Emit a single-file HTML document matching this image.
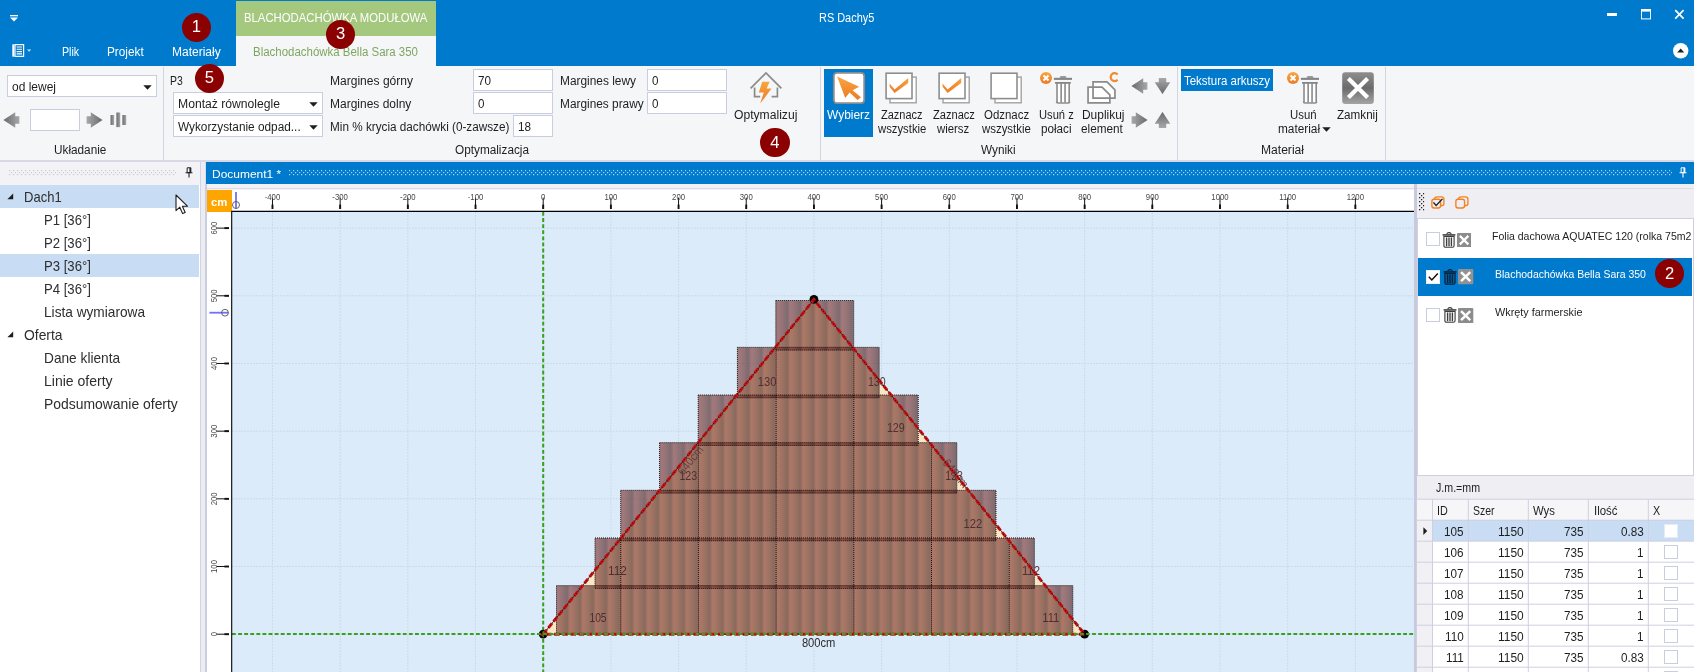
<!DOCTYPE html>
<html lang="pl"><head><meta charset="utf-8"><title>RS Dachy5</title>
<style>
html,body{margin:0;padding:0;}
body{width:1694px;height:672px;overflow:hidden;background:#fff;position:relative;
font-family:"Liberation Sans",sans-serif;font-size:12px;color:#1e1e1e;}
#app{position:absolute;left:0;top:0;width:1694px;height:672px;overflow:hidden;will-change:transform;}
#app div,#app span,#app svg{position:absolute;box-sizing:border-box;}
</style></head><body><div id="app">
<div style="left:0px;top:0px;width:1694px;height:66px;background:#007acc;"></div>
<div style="left:236px;top:1px;width:200px;height:35px;background:#a5c87f;"></div>
<div style="left:236px;top:36px;width:200px;height:30px;background:#f5f6f8;"></div>
<span style="left:244.30px;top:7.70px;height:20px;line-height:20px;font-size:12px;color:#ffffff;white-space:nowrap;transform-origin:0 50%;transform:scaleX(0.9440);">BLACHODACHÓWKA MODUŁOWA</span>
<span style="left:253.30px;top:42.10px;height:20px;line-height:20px;font-size:12px;color:#7fa65f;white-space:nowrap;transform-origin:0 50%;transform:scaleX(0.9549);">Blachodachówka Bella Sara 350</span>
<span style="left:819.00px;top:7.70px;height:20px;line-height:20px;font-size:12px;color:#ffffff;white-space:nowrap;transform-origin:0 50%;transform:scaleX(0.9107);">RS Dachy5</span>
<span style="left:61.70px;top:42.10px;height:20px;line-height:20px;font-size:12px;color:#ffffff;white-space:nowrap;transform-origin:0 50%;transform:scaleX(0.8899);">Plik</span>
<span style="left:107.30px;top:42.10px;height:20px;line-height:20px;font-size:12px;color:#ffffff;white-space:nowrap;transform-origin:0 50%;transform:scaleX(0.9834);">Projekt</span>
<span style="left:172.30px;top:42.10px;height:20px;line-height:20px;font-size:12px;color:#ffffff;white-space:nowrap;transform-origin:0 50%;transform:scaleX(0.9996);">Materiały</span>
<svg style="left:9px;top:13.8px" width="10" height="9" viewBox="0 0 10 9"><rect x="1" y="1" width="8" height="1.3" fill="#fff"/><path d="M1 3.6h8L5 7.6z" fill="#fff"/></svg>
<svg style="left:12.3px;top:44.4px" width="22" height="13.4" viewBox="0 0 22 13" preserveAspectRatio="none"><rect x="0.3" y="0.3" width="2" height="12" fill="#fff"/><rect x="3" y="0.6" width="8.6" height="11.4" fill="none" stroke="#fff" stroke-width="1.2"/><path d="M4.6 3h5.4M4.6 5.2h5.4M4.6 7.4h5.4M4.6 9.6h5.4" stroke="#fff" stroke-width="1"/><path d="M15 5.4h4.2L17.1 7.6z" fill="#cfe4f6"/></svg>
<div style="left:1606.6px;top:13px;width:10.0px;height:3px;background:#ffffff;"></div>
<svg style="left:1640.6px;top:9.2px" width="11" height="11" viewBox="0 0 11 11"><rect x="0.5" y="0.5" width="9" height="9.4" fill="none" stroke="#fff" stroke-width="1"/><rect x="0" y="0" width="10" height="2.6" fill="#fff"/></svg>
<svg style="left:1674px;top:9px" width="11" height="11" viewBox="0 0 11 11"><path d="M1.2 1.2l8.4 8.4M9.6 1.2L1.2 9.6" stroke="#fff" stroke-width="1.7"/></svg>
<svg style="left:1672px;top:42px" width="18" height="18" viewBox="0 0 18 18"><circle cx="8.7" cy="8.7" r="7.7" fill="#fff"/><path d="M5.2 10.4h7L8.7 6.6z" fill="#1e1e1e"/></svg>
<div style="left:0px;top:66px;width:1694px;height:94px;background:#f5f6f8;"></div>
<div style="left:0px;top:160px;width:1694px;height:2px;background:#d9d9e6;"></div>
<div style="left:163px;top:67px;width:1px;height:93px;background:#d4d4e2;"></div>
<div style="left:820px;top:67px;width:1px;height:93px;background:#d4d4e2;"></div>
<div style="left:1177px;top:67px;width:1px;height:93px;background:#d4d4e2;"></div>
<div style="left:1385px;top:67px;width:1px;height:93px;background:#d4d4e2;"></div>
<div style="left:7px;top:75px;width:150px;height:22px;background:#ffffff;border:1px solid #c9cde0;"></div>
<span style="left:12.00px;top:76.70px;height:20px;line-height:20px;font-size:12px;color:#1e1e1e;white-space:nowrap;transform-origin:0 50%;transform:scaleX(0.9991);">od lewej</span>
<svg style="left:143px;top:84.6px" width="9" height="5" viewBox="0 0 9 5"><path d="M0.3 0.3h8.4L4.5 4.7z" fill="#1e1e1e"/></svg>
<div style="left:30px;top:109px;width:50px;height:22px;background:#ffffff;border:1px solid #c9cde0;"></div>
<svg style="left:0;top:0" width="0" height="0"><defs><linearGradient id="ag" x1="0" y1="0" x2="1" y2="0"><stop offset="0" stop-color="#6a6a6a"/><stop offset="1" stop-color="#a8a8a8"/></linearGradient><linearGradient id="zg" x1="0" y1="0" x2="0" y2="1"><stop offset="0" stop-color="#8e8e8e"/><stop offset="0.5" stop-color="#6b6b6b"/><stop offset="1" stop-color="#a4a4a4"/></linearGradient><linearGradient id="og" x1="0" y1="0" x2="0" y2="1"><stop offset="0" stop-color="#f7a541"/><stop offset="1" stop-color="#ee7a25"/></linearGradient></defs></svg>
<svg style="left:3.3px;top:112px" width="17" height="16" viewBox="0 0 17 16"><path transform="rotate(0 8.5 8)" d="M0.4 8L12.2 0.2V4.3H16.4V11.7H12.2V15.8z" fill="url(#ag)"/></svg>
<svg style="left:86.3px;top:112px" width="17" height="16" viewBox="0 0 17 16"><path transform="rotate(180 8.5 8)" d="M0.4 8L12.2 0.2V4.3H16.4V11.7H12.2V15.8z" fill="url(#ag)"/></svg>
<svg style="left:110px;top:112px" width="17" height="16" viewBox="0 0 17 16"><rect x="0.5" y="3" width="3.6" height="10" fill="url(#ag)"/><rect x="6.4" y="0.5" width="3.8" height="14.6" fill="url(#ag)"/><rect x="12.4" y="3" width="3.8" height="10" fill="url(#ag)"/></svg>
<span style="left:54.30px;top:139.70px;height:20px;line-height:20px;font-size:12px;color:#1e1e1e;white-space:nowrap;transform-origin:0 50%;transform:scaleX(0.9813);">Układanie</span>
<span style="left:170.30px;top:70.70px;height:20px;line-height:20px;font-size:12px;color:#1e1e1e;white-space:nowrap;transform-origin:0 50%;transform:scaleX(0.8675);">P3</span>
<div style="left:173px;top:92px;width:150px;height:22px;background:#ffffff;border:1px solid #c9cde0;"></div>
<span style="left:178.20px;top:94.10px;height:20px;line-height:20px;font-size:12px;color:#1e1e1e;white-space:nowrap;transform-origin:0 50%;transform:scaleX(1.0131);">Montaż równolegle</span>
<svg style="left:309px;top:101.5px" width="9" height="5" viewBox="0 0 9 5"><path d="M0.3 0.3h8.4L4.5 4.7z" fill="#1e1e1e"/></svg>
<div style="left:173px;top:115px;width:150px;height:22px;background:#ffffff;border:1px solid #c9cde0;"></div>
<span style="left:178.00px;top:116.50px;height:20px;line-height:20px;font-size:12px;color:#1e1e1e;white-space:nowrap;transform-origin:0 50%;transform:scaleX(0.9843);">Wykorzystanie odpad...</span>
<svg style="left:309px;top:124.5px" width="9" height="5" viewBox="0 0 9 5"><path d="M0.3 0.3h8.4L4.5 4.7z" fill="#1e1e1e"/></svg>
<span style="left:330.40px;top:70.70px;height:20px;line-height:20px;font-size:12px;color:#1e1e1e;white-space:nowrap;transform-origin:0 50%;transform:scaleX(1.0039);">Margines górny</span>
<span style="left:330.40px;top:93.70px;height:20px;line-height:20px;font-size:12px;color:#1e1e1e;white-space:nowrap;transform-origin:0 50%;transform:scaleX(0.9993);">Margines dolny</span>
<span style="left:330.40px;top:116.50px;height:20px;line-height:20px;font-size:12px;color:#1e1e1e;white-space:nowrap;transform-origin:0 50%;transform:scaleX(0.9784);">Min % krycia dachówki (0-zawsze)</span>
<div style="left:473px;top:69px;width:80px;height:22px;background:#ffffff;border:1px solid #c9cde0;"></div>
<span style="left:478.00px;top:70.70px;height:20px;line-height:20px;font-size:12px;color:#1e1e1e;white-space:nowrap;transform-origin:0 50%;transform:scaleX(0.9760);">70</span>
<div style="left:473px;top:92px;width:80px;height:22px;background:#ffffff;border:1px solid #c9cde0;"></div>
<span style="left:478.00px;top:93.70px;height:20px;line-height:20px;font-size:12px;color:#1e1e1e;white-space:nowrap;transform-origin:0 50%;transform:scaleX(0.9673);">0</span>
<div style="left:513px;top:115px;width:40px;height:22px;background:#ffffff;border:1px solid #c9cde0;"></div>
<span style="left:518.00px;top:116.50px;height:20px;line-height:20px;font-size:12px;color:#1e1e1e;white-space:nowrap;transform-origin:0 50%;transform:scaleX(0.9760);">18</span>
<span style="left:560.00px;top:70.70px;height:20px;line-height:20px;font-size:12px;color:#1e1e1e;white-space:nowrap;transform-origin:0 50%;transform:scaleX(0.9911);">Margines lewy</span>
<span style="left:560.00px;top:93.70px;height:20px;line-height:20px;font-size:12px;color:#1e1e1e;white-space:nowrap;transform-origin:0 50%;transform:scaleX(0.9880);">Margines prawy</span>
<div style="left:647px;top:69px;width:80px;height:22px;background:#ffffff;border:1px solid #c9cde0;"></div>
<span style="left:652.00px;top:70.70px;height:20px;line-height:20px;font-size:12px;color:#1e1e1e;white-space:nowrap;transform-origin:0 50%;transform:scaleX(0.9673);">0</span>
<div style="left:647px;top:92px;width:80px;height:22px;background:#ffffff;border:1px solid #c9cde0;"></div>
<span style="left:652.00px;top:93.70px;height:20px;line-height:20px;font-size:12px;color:#1e1e1e;white-space:nowrap;transform-origin:0 50%;transform:scaleX(0.9673);">0</span>
<svg style="left:749px;top:71px" width="34" height="34" viewBox="0 0 34 34"><path d="M1.6 17.4L17 1.9L32.4 17.4" fill="none" stroke="#8a8a8a" stroke-width="1.7"/><path d="M5.6 16.5V25.6H11.2M28.4 16.5V25.6H22.6" fill="none" stroke="#8a8a8a" stroke-width="1.7"/><path d="M13.2 10.8H20.6L17.6 17.6H22.6L11.2 32.6L14.8 21.6H9.8z" fill="url(#og)"/></svg>
<span style="left:734.00px;top:104.90px;height:20px;line-height:20px;font-size:12px;color:#1e1e1e;white-space:nowrap;transform-origin:0 50%;transform:scaleX(1.0105);">Optymalizuj</span>
<span style="left:455.00px;top:139.70px;height:20px;line-height:20px;font-size:12px;color:#1e1e1e;white-space:nowrap;transform-origin:0 50%;transform:scaleX(0.9820);">Optymalizacja</span>
<div style="left:824px;top:69px;width:49px;height:68px;background:#007acc;"></div>
<svg style="left:832px;top:71px" width="34" height="34" viewBox="0 0 34 34"><rect x="1.8" y="1.8" width="30.4" height="30.4" rx="3.2" fill="#fff" stroke="#8b8b8b" stroke-width="1.8"/><path d="M5.1 5.5L27.1 15.8L20.6 19.2L28.9 26.2L25.6 28.9L17.6 21.6L13.2 26.9z" fill="url(#og)"/></svg>
<span style="left:826.50px;top:104.90px;height:20px;line-height:20px;font-size:12px;color:#ffffff;white-space:nowrap;transform-origin:0 50%;transform:scaleX(0.9954);">Wybierz</span>
<svg style="left:884px;top:71px" width="34" height="34" viewBox="0 0 34 34"><rect x="6" y="6.1" width="26.2" height="25.7" fill="#fff" stroke="#a2a2a2" stroke-width="1.4"/><rect x="2.1" y="2.2" width="25.9" height="25.4" fill="#fff" stroke="#8e8e8e" stroke-width="1.6"/><path d="M5.6 12.6L10.6 18.4L24.2 6.9V11.9L10.6 22L5.6 15.8z" fill="url(#og)"/></svg>
<span style="left:880.50px;top:104.90px;height:20px;line-height:20px;font-size:12px;color:#1e1e1e;white-space:nowrap;transform-origin:0 50%;transform:scaleX(0.9149);">Zaznacz</span>
<span style="left:877.61px;top:118.70px;height:20px;line-height:20px;font-size:12px;color:#1e1e1e;white-space:nowrap;transform-origin:0 50%;transform:scaleX(0.9421);">wszystkie</span>
<svg style="left:937px;top:71px" width="34" height="34" viewBox="0 0 34 34"><rect x="6" y="6.1" width="26.2" height="25.7" fill="#fff" stroke="#a2a2a2" stroke-width="1.4"/><rect x="2.1" y="2.2" width="25.9" height="25.4" fill="#fff" stroke="#8e8e8e" stroke-width="1.6"/><path d="M5.6 12.6L10.6 18.4L24.2 6.9V11.9L10.6 22L5.6 15.8z" fill="url(#og)"/></svg>
<span style="left:933.10px;top:104.90px;height:20px;line-height:20px;font-size:12px;color:#1e1e1e;white-space:nowrap;transform-origin:0 50%;transform:scaleX(0.9237);">Zaznacz</span>
<span style="left:937.41px;top:118.70px;height:20px;line-height:20px;font-size:12px;color:#1e1e1e;white-space:nowrap;transform-origin:0 50%;transform:scaleX(0.9478);">wiersz</span>
<svg style="left:989px;top:71px" width="34" height="34" viewBox="0 0 34 34"><rect x="6" y="6.1" width="26.2" height="25.7" fill="#fff" stroke="#a2a2a2" stroke-width="1.4"/><rect x="2.1" y="2.2" width="25.9" height="25.4" fill="#fff" stroke="#8e8e8e" stroke-width="1.6"/></svg>
<span style="left:984.20px;top:104.90px;height:20px;line-height:20px;font-size:12px;color:#1e1e1e;white-space:nowrap;transform-origin:0 50%;transform:scaleX(0.9536);">Odznacz</span>
<span style="left:982.21px;top:118.70px;height:20px;line-height:20px;font-size:12px;color:#1e1e1e;white-space:nowrap;transform-origin:0 50%;transform:scaleX(0.9499);">wszystkie</span>
<svg style="left:1039px;top:71px" width="34" height="34" viewBox="0 0 34 34"><circle cx="7" cy="7" r="6" fill="url(#og)"/><path d="M4.5 4.5l5 5M9.5 4.5L4.5 9.5" stroke="#fff" stroke-width="2.1"/><rect x="14.9" y="6.8" width="18.1" height="2.1" fill="#858585"/><path d="M20.8 7V6.4Q20.8 5 22.4 5H25.8Q27.4 5 27.4 6.4V7z" fill="#9a9a9a"/><path d="M17.2 11H31V31Q31 32.7 29.3 32.7H18.9Q17.2 32.7 17.2 31z" fill="#ffffff"/><rect x="16" y="11" width="15.8" height="1.8" fill="#858585"/><path d="M18 12V31.4M22.15 12V31.4M26.05 12V31.4M30.2 12V31.4" stroke="#8a8a8a" stroke-width="1.6"/><path d="M17.4 30.6Q17.6 32 19 32H29.2Q30.6 32 30.8 30.6" fill="none" stroke="#8a8a8a" stroke-width="1.5"/></svg>
<span style="left:1038.50px;top:104.90px;height:20px;line-height:20px;font-size:12px;color:#1e1e1e;white-space:nowrap;transform-origin:0 50%;transform:scaleX(0.9298);">Usuń z</span>
<span style="left:1040.70px;top:118.70px;height:20px;line-height:20px;font-size:12px;color:#1e1e1e;white-space:nowrap;transform-origin:0 50%;transform:scaleX(0.9738);">połaci</span>
<svg style="left:1086px;top:71px" width="34" height="34" viewBox="0 0 34 34"><path d="M7.05 10.95H21L28.95 18.8V27.15H7.05z" fill="#fff" stroke="#8a8a8a" stroke-width="1.7"/><path d="M2.05 16.05H16L23.85 23.9V31.85H2.05z" fill="#fff" fill-opacity="0.85" stroke="#8a8a8a" stroke-width="1.7"/><path d="M7.05 16V27.15H23.8" fill="none" stroke="#8a8a8a" stroke-width="1.7"/><path d="M31.6 3.4A4 4 0 1 0 31.6 8.8" fill="none" stroke="#f08a2c" stroke-width="2.2"/></svg>
<span style="left:1081.50px;top:104.90px;height:20px;line-height:20px;font-size:12px;color:#1e1e1e;white-space:nowrap;transform-origin:0 50%;transform:scaleX(0.9949);">Duplikuj</span>
<span style="left:1081.30px;top:118.70px;height:20px;line-height:20px;font-size:12px;color:#1e1e1e;white-space:nowrap;transform-origin:0 50%;transform:scaleX(0.9808);">element</span>
<svg style="left:1130.8px;top:78px" width="17" height="16" viewBox="0 0 17 16"><path transform="rotate(0 8.5 8)" d="M0.4 8L12.2 0.2V4.3H16.4V11.7H12.2V15.8z" fill="url(#ag)"/></svg>
<svg style="left:1153.9px;top:78px" width="17" height="16" viewBox="0 0 17 16"><path transform="rotate(270 8.5 8)" d="M0.4 8L12.2 0.2V4.3H16.4V11.7H12.2V15.8z" fill="url(#ag)"/></svg>
<svg style="left:1130.8px;top:112.4px" width="17" height="16" viewBox="0 0 17 16"><path transform="rotate(180 8.5 8)" d="M0.4 8L12.2 0.2V4.3H16.4V11.7H12.2V15.8z" fill="url(#ag)"/></svg>
<svg style="left:1153.9px;top:112.4px" width="17" height="16" viewBox="0 0 17 16"><path transform="rotate(90 8.5 8)" d="M0.4 8L12.2 0.2V4.3H16.4V11.7H12.2V15.8z" fill="url(#ag)"/></svg>
<span style="left:981.00px;top:139.70px;height:20px;line-height:20px;font-size:12px;color:#1e1e1e;white-space:nowrap;transform-origin:0 50%;transform:scaleX(0.9836);">Wyniki</span>
<div style="left:1181px;top:69px;width:92px;height:22px;background:#007acc;"></div>
<span style="left:1184.20px;top:70.70px;height:20px;line-height:20px;font-size:12px;color:#ffffff;white-space:nowrap;transform-origin:0 50%;transform:scaleX(0.9556);">Tekstura arkuszy</span>
<svg style="left:1286px;top:71px" width="34" height="34" viewBox="0 0 34 34"><circle cx="7" cy="7" r="6" fill="url(#og)"/><path d="M4.5 4.5l5 5M9.5 4.5L4.5 9.5" stroke="#fff" stroke-width="2.1"/><rect x="14.9" y="6.8" width="18.1" height="2.1" fill="#858585"/><path d="M20.8 7V6.4Q20.8 5 22.4 5H25.8Q27.4 5 27.4 6.4V7z" fill="#9a9a9a"/><path d="M17.2 11H31V31Q31 32.7 29.3 32.7H18.9Q17.2 32.7 17.2 31z" fill="#ffffff"/><rect x="16" y="11" width="15.8" height="1.8" fill="#858585"/><path d="M18 12V31.4M22.15 12V31.4M26.05 12V31.4M30.2 12V31.4" stroke="#8a8a8a" stroke-width="1.6"/><path d="M17.4 30.6Q17.6 32 19 32H29.2Q30.6 32 30.8 30.6" fill="none" stroke="#8a8a8a" stroke-width="1.5"/></svg>
<span style="left:1290.20px;top:104.90px;height:20px;line-height:20px;font-size:12px;color:#1e1e1e;white-space:nowrap;transform-origin:0 50%;transform:scaleX(0.9478);">Usuń</span>
<span style="left:1277.90px;top:118.70px;height:20px;line-height:20px;font-size:12px;color:#1e1e1e;white-space:nowrap;transform-origin:0 50%;transform:scaleX(0.9855);">materiał</span>
<svg style="left:1322px;top:126.6px" width="9" height="5" viewBox="0 0 9 5"><path d="M0.3 0.3h8.4L4.5 4.7z" fill="#1e1e1e"/></svg>
<svg style="left:1341px;top:71px" width="34" height="34" viewBox="0 0 34 34"><rect x="1.2" y="1.3" width="31.6" height="31.6" rx="3" fill="url(#zg)"/><path d="M7.4 7.4L26.6 26.6M26.6 7.4L7.4 26.6" stroke="#fff" stroke-width="4.2"/></svg>
<span style="left:1337.40px;top:104.90px;height:20px;line-height:20px;font-size:12px;color:#1e1e1e;white-space:nowrap;transform-origin:0 50%;transform:scaleX(0.9714);">Zamknij</span>
<span style="left:1260.50px;top:139.70px;height:20px;line-height:20px;font-size:12px;color:#1e1e1e;white-space:nowrap;transform-origin:0 50%;transform:scaleX(1.0066);">Materiał</span>
<div style="left:0px;top:162px;width:200px;height:510px;background:#ffffff;"></div>
<div style="left:0px;top:162px;width:200px;height:23px;background:#f3f3f7;"></div>
<svg style="left:9px;top:170px" width="167" height="7" viewBox="0 0 167 7"><defs><pattern id="gp1" width="4" height="4" patternUnits="userSpaceOnUse"><rect x="0" y="0" width="1.2" height="1.2" fill="#c6c6d4"/><rect x="2" y="2" width="1.2" height="1.2" fill="#c6c6d4"/></pattern></defs><rect width="167" height="6" fill="url(#gp1)"/></svg>
<svg style="left:184.6px;top:167px" width="8" height="11.2" viewBox="0 0 9 12"><path d="M2.4 0.6H6.6V6H2.4z" fill="none" stroke="#1e1e1e" stroke-width="1.1"/><rect x="5" y="0.6" width="1.6" height="5.4" fill="#1e1e1e"/><path d="M0.6 6.2H8.4M4.5 6.4V11.4" stroke="#1e1e1e" stroke-width="1.2"/></svg>
<div style="left:200px;top:162px;width:6px;height:510px;background:#ececf3;border-left:1px solid #d3d3e2;border-right:1px solid #dadae6;"></div>
<div style="left:0px;top:185px;width:199px;height:23px;background:#c8dcf3;"></div>
<div style="left:0px;top:254px;width:199px;height:23px;background:#c8dcf3;"></div>
<span style="left:23.90px;top:187.20px;height:20px;line-height:20px;font-size:14.2px;color:#2e2e2e;white-space:nowrap;transform-origin:0 50%;transform:scaleX(0.9187);">Dach1</span>
<svg style="left:7px;top:193.1px" width="7" height="7" viewBox="0 0 7 7"><path d="M6.2 0.4V6.2H0.4z" fill="#1e1e1e"/></svg>
<span style="left:44.10px;top:210.20px;height:20px;line-height:20px;font-size:14.2px;color:#2e2e2e;white-space:nowrap;transform-origin:0 50%;transform:scaleX(0.9252);">P1 [36°]</span>
<span style="left:44.10px;top:233.20px;height:20px;line-height:20px;font-size:14.2px;color:#2e2e2e;white-space:nowrap;transform-origin:0 50%;transform:scaleX(0.9252);">P2 [36°]</span>
<span style="left:44.10px;top:256.20px;height:20px;line-height:20px;font-size:14.2px;color:#2e2e2e;white-space:nowrap;transform-origin:0 50%;transform:scaleX(0.9252);">P3 [36°]</span>
<span style="left:44.10px;top:279.20px;height:20px;line-height:20px;font-size:14.2px;color:#2e2e2e;white-space:nowrap;transform-origin:0 50%;transform:scaleX(0.9252);">P4 [36°]</span>
<span style="left:43.90px;top:302.20px;height:20px;line-height:20px;font-size:14.2px;color:#2e2e2e;white-space:nowrap;transform-origin:0 50%;transform:scaleX(0.9634);">Lista wymiarowa</span>
<span style="left:23.70px;top:325.20px;height:20px;line-height:20px;font-size:14.2px;color:#2e2e2e;white-space:nowrap;transform-origin:0 50%;transform:scaleX(0.9778);">Oferta</span>
<svg style="left:7px;top:331.1px" width="7" height="7" viewBox="0 0 7 7"><path d="M6.2 0.4V6.2H0.4z" fill="#1e1e1e"/></svg>
<span style="left:43.90px;top:348.20px;height:20px;line-height:20px;font-size:14.2px;color:#2e2e2e;white-space:nowrap;transform-origin:0 50%;transform:scaleX(0.9651);">Dane klienta</span>
<span style="left:43.90px;top:371.20px;height:20px;line-height:20px;font-size:14.2px;color:#2e2e2e;white-space:nowrap;transform-origin:0 50%;transform:scaleX(0.9879);">Linie oferty</span>
<span style="left:43.90px;top:394.20px;height:20px;line-height:20px;font-size:14.2px;color:#2e2e2e;white-space:nowrap;transform-origin:0 50%;transform:scaleX(0.9809);">Podsumowanie oferty</span>
<svg style="left:175px;top:194px" width="14" height="21" viewBox="0 0 14 21"><path d="M1 1V16.6L4.8 13.2L7.6 19.6L10.2 18.4L7.4 12.2H12.4z" fill="#fff" stroke="#1e1e1e" stroke-width="1.1" stroke-linejoin="round"/></svg>
<div style="left:206px;top:162px;width:1488px;height:22px;background:#007acc;"></div>
<span style="left:211.60px;top:163.70px;height:20px;line-height:20px;font-size:11.2px;color:#ffffff;white-space:nowrap;transform-origin:0 50%;transform:scaleX(1.0690);">Document1 *</span>
<div style="left:206px;top:184px;width:1488px;height:6px;background:#f1f1f6;"></div>
<div style="left:206px;top:188px;width:1488px;height:1px;background:#dcdce8;"></div>
<div style="left:205px;top:184px;width:2px;height:488px;background:#cdcde0;"></div>
<div style="left:207px;top:190px;width:1207px;height:22px;background:#ffffff;"></div>
<div style="left:207px;top:212px;width:25px;height:460px;background:#ffffff;"></div>
<div style="left:207px;top:190px;width:25px;height:22px;background:#ffa500;"></div>
<span style="left:210.90px;top:191.50px;height:20px;line-height:20px;font-size:10.6px;color:#ffffff;white-space:nowrap;transform-origin:0 50%;transform:scaleX(1.0670);font-weight:bold;">cm</span>
<svg style="left:206px;top:184px" width="1208" height="488" viewBox="206 184 1208 488"><defs><pattern id="gp2" width="4" height="4" patternUnits="userSpaceOnUse"><rect x="0" y="0" width="1.2" height="1.2" fill="#9ccbee"/><rect x="2" y="2" width="1.2" height="1.2" fill="#9ccbee"/></pattern><linearGradient id="tg" x1="0" y1="0" x2="1" y2="0"><stop offset="0" stop-color="#6c2c28" stop-opacity="0.62"/><stop offset="0.12" stop-color="#80332e" stop-opacity="0.62"/><stop offset="0.5" stop-color="#652a26" stop-opacity="0.62"/><stop offset="0.8" stop-color="#4b1f1e" stop-opacity="0.62"/><stop offset="0.9" stop-color="#491e1e" stop-opacity="0.62"/><stop offset="1" stop-color="#6c2c28" stop-opacity="0.62"/></linearGradient><pattern id="tp" x="543.0" y="0" width="12.95" height="40" patternUnits="userSpaceOnUse"><rect width="12.95" height="40" fill="url(#tg)"/></pattern></defs><rect x="232" y="212" width="1182" height="460" fill="#dbebfa"/><path d="M272.48 212V672M340.16 212V672M407.84 212V672M475.52 212V672M543.20 212V672M610.88 212V672M678.56 212V672M746.24 212V672M813.92 212V672M881.60 212V672M949.28 212V672M1016.96 212V672M1084.64 212V672M1152.32 212V672M1220.00 212V672M1287.68 212V672M1355.36 212V672M232 634.20H1414M232 566.52H1414M232 498.84H1414M232 431.16H1414M232 363.48H1414M232 295.80H1414M232 228.12H1414" stroke="#cedae7" stroke-width="1" stroke-dasharray="2 1" fill="none"/><path d="M543.20 212V672" stroke="#35a11d" stroke-width="2" stroke-dasharray="3.8 2.3" fill="none"/><path d="M543.20 634.20L813.92 299.59L1084.64 634.20z" fill="#f6e8c6"/><rect x="556.50" y="585.64" width="516.30" height="48.56" fill="url(#tp)"/><rect x="595.00" y="537.98" width="439.40" height="50.46" fill="url(#tp)"/><rect x="620.70" y="490.32" width="375.30" height="50.46" fill="url(#tp)"/><rect x="659.60" y="442.66" width="297.20" height="50.46" fill="url(#tp)"/><rect x="698.20" y="395.00" width="220.00" height="50.46" fill="url(#tp)"/><rect x="737.40" y="347.34" width="141.80" height="50.46" fill="url(#tp)"/><rect x="775.80" y="300.50" width="77.90" height="49.64" fill="url(#tp)"/><path d="M556.50 585.64H1072.80V634.20H556.50zM620.70 585.64V634.20M698.40 585.64V634.20M776.10 585.64V634.20M853.80 585.64V634.20M931.50 585.64V634.20M1009.20 585.64V634.20M595.00 537.98H1034.40V588.44H595.00zM620.70 537.98V588.44M698.40 537.98V588.44M776.10 537.98V588.44M853.80 537.98V588.44M931.50 537.98V588.44M1009.20 537.98V588.44M620.70 490.32H996.00V540.78H620.70zM698.40 490.32V540.78M776.10 490.32V540.78M853.80 490.32V540.78M931.50 490.32V540.78M659.60 442.66H956.80V493.12H659.60zM698.40 442.66V493.12M776.10 442.66V493.12M853.80 442.66V493.12M931.50 442.66V493.12M698.20 395.00H918.20V445.46H698.20zM776.10 395.00V445.46M853.80 395.00V445.46M737.40 347.34H879.20V397.80H737.40zM776.10 347.34V397.80M853.80 347.34V397.80M775.80 300.50H853.70V350.14H775.80z" stroke="#1a0f0f" stroke-width="1" stroke-dasharray="1 1" fill="none"/><text transform="translate(589.40 622.10) scale(0.859 1)" font-size="12" fill="#4a282b" fill-opacity="0.92">105</text><text transform="translate(1042.20 622.10) scale(0.943 1)" font-size="12" fill="#4a282b" fill-opacity="0.92">111</text><text transform="translate(608.00 574.60) scale(0.993 1)" font-size="12" fill="#4a282b" fill-opacity="0.92">112</text><text transform="translate(1021.90 574.60) scale(0.946 1)" font-size="12" fill="#4a282b" fill-opacity="0.92">112</text><text transform="translate(963.40 527.70) scale(0.939 1)" font-size="12" fill="#4a282b" fill-opacity="0.92">122</text><text transform="translate(679.40 479.50) scale(0.889 1)" font-size="12" fill="#4a282b" fill-opacity="0.92">123</text><text transform="translate(945.30 479.50) scale(0.884 1)" font-size="12" fill="#4a282b" fill-opacity="0.92">123</text><text transform="translate(886.90 432.30) scale(0.894 1)" font-size="12" fill="#4a282b" fill-opacity="0.92">129</text><text transform="translate(757.70 386.30) scale(0.934 1)" font-size="12" fill="#4a282b" fill-opacity="0.92">130</text><text transform="translate(867.90 386.30) scale(0.889 1)" font-size="12" fill="#4a282b" fill-opacity="0.92">130</text><text transform="translate(801.9 647.2) scale(0.93 1)" font-size="12" fill="#2a2a2a">800cm</text><text transform="translate(683 476) rotate(-51) scale(0.93 1)" font-size="12" fill="#5a3a3a" fill-opacity="0.85">640cm</text><text transform="translate(942 463) rotate(51) scale(0.93 1)" font-size="12" fill="#5a3a3a" fill-opacity="0.85">640cm</text><circle cx="543.20" cy="634.20" r="4.4" fill="#050505"/><circle cx="813.92" cy="299.29" r="4.4" fill="#050505"/><circle cx="1084.64" cy="634.20" r="4.4" fill="#050505"/><path d="M543.20 634.20L813.92 299.59L1084.64 634.20z" stroke="#2a0808" stroke-width="0.9" stroke-opacity="0.75" fill="none"/><path d="M543.20 634.20L813.92 299.59L1084.64 634.20z" stroke="#cc1414" stroke-width="3" stroke-dasharray="5.6 2.6" fill="none"/><path d="M543.20 634.20L813.92 299.59L1084.64 634.20z" stroke="#200404" stroke-opacity="0.7" stroke-width="1.1" stroke-dasharray="1.2 1.53" fill="none"/><path d="M232 634.10H1414" stroke="#35a11d" stroke-width="2" stroke-dasharray="3.8 2.3" fill="none"/><path d="M543.20 627.20v14" stroke="#35a11d" stroke-width="1.2" stroke-dasharray="2 2" fill="none"/><path d="M272.48 197.6V209" stroke="#111" stroke-width="1"/><path d="M272.48 204.6V209" stroke="#111" stroke-width="1.9"/><text transform="translate(264.69 199.6) scale(0.95 1)" font-size="8.2" fill="#484848">-400</text><path d="M340.16 197.6V209" stroke="#111" stroke-width="1"/><path d="M340.16 204.6V209" stroke="#111" stroke-width="1.9"/><text transform="translate(332.37 199.6) scale(0.95 1)" font-size="8.2" fill="#484848">-300</text><path d="M407.84 197.6V209" stroke="#111" stroke-width="1"/><path d="M407.84 204.6V209" stroke="#111" stroke-width="1.9"/><text transform="translate(400.05 199.6) scale(0.95 1)" font-size="8.2" fill="#484848">-200</text><path d="M475.52 197.6V209" stroke="#111" stroke-width="1"/><path d="M475.52 204.6V209" stroke="#111" stroke-width="1.9"/><text transform="translate(467.73 199.6) scale(0.95 1)" font-size="8.2" fill="#484848">-100</text><path d="M543.20 197.6V209" stroke="#111" stroke-width="1"/><path d="M543.20 204.6V209" stroke="#111" stroke-width="1.9"/><text transform="translate(541.03 199.6) scale(0.95 1)" font-size="8.2" fill="#484848">0</text><path d="M610.88 197.6V209" stroke="#111" stroke-width="1"/><path d="M610.88 204.6V209" stroke="#111" stroke-width="1.9"/><text transform="translate(604.38 199.6) scale(0.95 1)" font-size="8.2" fill="#484848">100</text><path d="M678.56 197.6V209" stroke="#111" stroke-width="1"/><path d="M678.56 204.6V209" stroke="#111" stroke-width="1.9"/><text transform="translate(672.06 199.6) scale(0.95 1)" font-size="8.2" fill="#484848">200</text><path d="M746.24 197.6V209" stroke="#111" stroke-width="1"/><path d="M746.24 204.6V209" stroke="#111" stroke-width="1.9"/><text transform="translate(739.74 199.6) scale(0.95 1)" font-size="8.2" fill="#484848">300</text><path d="M813.92 197.6V209" stroke="#111" stroke-width="1"/><path d="M813.92 204.6V209" stroke="#111" stroke-width="1.9"/><text transform="translate(807.42 199.6) scale(0.95 1)" font-size="8.2" fill="#484848">400</text><path d="M881.60 197.6V209" stroke="#111" stroke-width="1"/><path d="M881.60 204.6V209" stroke="#111" stroke-width="1.9"/><text transform="translate(875.10 199.6) scale(0.95 1)" font-size="8.2" fill="#484848">500</text><path d="M949.28 197.6V209" stroke="#111" stroke-width="1"/><path d="M949.28 204.6V209" stroke="#111" stroke-width="1.9"/><text transform="translate(942.78 199.6) scale(0.95 1)" font-size="8.2" fill="#484848">600</text><path d="M1016.96 197.6V209" stroke="#111" stroke-width="1"/><path d="M1016.96 204.6V209" stroke="#111" stroke-width="1.9"/><text transform="translate(1010.46 199.6) scale(0.95 1)" font-size="8.2" fill="#484848">700</text><path d="M1084.64 197.6V209" stroke="#111" stroke-width="1"/><path d="M1084.64 204.6V209" stroke="#111" stroke-width="1.9"/><text transform="translate(1078.14 199.6) scale(0.95 1)" font-size="8.2" fill="#484848">800</text><path d="M1152.32 197.6V209" stroke="#111" stroke-width="1"/><path d="M1152.32 204.6V209" stroke="#111" stroke-width="1.9"/><text transform="translate(1145.82 199.6) scale(0.95 1)" font-size="8.2" fill="#484848">900</text><path d="M1220.00 197.6V209" stroke="#111" stroke-width="1"/><path d="M1220.00 204.6V209" stroke="#111" stroke-width="1.9"/><text transform="translate(1211.34 199.6) scale(0.95 1)" font-size="8.2" fill="#484848">1000</text><path d="M1287.68 197.6V209" stroke="#111" stroke-width="1"/><path d="M1287.68 204.6V209" stroke="#111" stroke-width="1.9"/><text transform="translate(1279.31 199.6) scale(0.95 1)" font-size="8.2" fill="#484848">1100</text><path d="M1355.36 197.6V209" stroke="#111" stroke-width="1"/><path d="M1355.36 204.6V209" stroke="#111" stroke-width="1.9"/><text transform="translate(1346.70 199.6) scale(0.95 1)" font-size="8.2" fill="#484848">1200</text><path d="M216.6 634.20H229" stroke="#111" stroke-width="1"/><path d="M224.4 634.20H229" stroke="#111" stroke-width="1.9"/><text transform="translate(217.2 636.37) rotate(-90) scale(0.95 1)" font-size="8.2" fill="#484848">0</text><path d="M216.6 566.52H229" stroke="#111" stroke-width="1"/><path d="M224.4 566.52H229" stroke="#111" stroke-width="1.9"/><text transform="translate(217.2 573.02) rotate(-90) scale(0.95 1)" font-size="8.2" fill="#484848">100</text><path d="M216.6 498.84H229" stroke="#111" stroke-width="1"/><path d="M224.4 498.84H229" stroke="#111" stroke-width="1.9"/><text transform="translate(217.2 505.34) rotate(-90) scale(0.95 1)" font-size="8.2" fill="#484848">200</text><path d="M216.6 431.16H229" stroke="#111" stroke-width="1"/><path d="M224.4 431.16H229" stroke="#111" stroke-width="1.9"/><text transform="translate(217.2 437.66) rotate(-90) scale(0.95 1)" font-size="8.2" fill="#484848">300</text><path d="M216.6 363.48H229" stroke="#111" stroke-width="1"/><path d="M224.4 363.48H229" stroke="#111" stroke-width="1.9"/><text transform="translate(217.2 369.98) rotate(-90) scale(0.95 1)" font-size="8.2" fill="#484848">400</text><path d="M216.6 295.80H229" stroke="#111" stroke-width="1"/><path d="M224.4 295.80H229" stroke="#111" stroke-width="1.9"/><text transform="translate(217.2 302.30) rotate(-90) scale(0.95 1)" font-size="8.2" fill="#484848">500</text><path d="M216.6 228.12H229" stroke="#111" stroke-width="1"/><path d="M224.4 228.12H229" stroke="#111" stroke-width="1.9"/><text transform="translate(217.2 234.62) rotate(-90) scale(0.95 1)" font-size="8.2" fill="#484848">600</text><path d="M236 192V208.4" stroke="#7070f8" stroke-width="1.8"/><circle cx="236" cy="205" r="3.5" fill="none" stroke="#555" stroke-width="0.9"/><path d="M209.4 312.7H228.4" stroke="#7070f8" stroke-width="1.8"/><circle cx="225" cy="312.7" r="3.4" fill="none" stroke="#555" stroke-width="0.9"/><path d="M231.7 211.4V672M231.2 211.4H1414" stroke="#000" stroke-width="1.1" fill="none"/></svg>
<svg style="left:289px;top:170px" width="1383" height="7" viewBox="0 0 1383 7"><defs><pattern id="gp3" width="4" height="4" patternUnits="userSpaceOnUse"><rect x="0" y="0" width="1.2" height="1.2" fill="#a9d3f1"/><rect x="2" y="2" width="1.2" height="1.2" fill="#a9d3f1"/></pattern></defs><rect width="1383" height="6" fill="url(#gp3)"/></svg>
<svg style="left:1679px;top:167px" width="8" height="11.2" viewBox="0 0 9 12"><path d="M2.4 0.6H6.6V6H2.4z" fill="none" stroke="#ffffff" stroke-width="1.1"/><rect x="5" y="0.6" width="1.6" height="5.4" fill="#ffffff"/><path d="M0.6 6.2H8.4M4.5 6.4V11.4" stroke="#ffffff" stroke-width="1.2"/></svg>
<div style="left:1414px;top:184px;width:280px;height:488px;background:#eeeef3;"></div>
<div style="left:1414px;top:184px;width:3px;height:488px;background:#c9c9de;"></div>
<div style="left:1417px;top:188px;width:277px;height:1px;background:#dcdce8;"></div>
<svg style="left:1419px;top:193px" width="6" height="19" viewBox="0 0 6 19"><defs><pattern id="gp4" width="4" height="4" patternUnits="userSpaceOnUse"><rect x="0" y="0" width="1.3" height="1.3" fill="#222"/><rect x="2" y="2" width="1.3" height="1.3" fill="#222"/></pattern></defs><rect width="5.4" height="18" fill="url(#gp4)"/></svg>
<svg style="left:1431.4px;top:195.6px" width="14.6" height="13.6" viewBox="0 0 16 15"><rect x="0.9" y="3.6" width="9.6" height="9.6" rx="2.4" fill="none" stroke="#f58220" stroke-width="1.5"/><path d="M3.6 3.4Q4 0.9 6.6 0.9H11.4Q14.2 0.9 14.2 3.6V8.2Q14.2 10.6 11 10.8" fill="none" stroke="#f58220" stroke-width="1.5"/><path d="M2.6 7L5.6 10.4L12.6 3.2" fill="none" stroke="#1e1e1e" stroke-width="1.5"/></svg>
<svg style="left:1454.6px;top:195.6px" width="14.6" height="13.6" viewBox="0 0 16 15"><rect x="0.9" y="3.6" width="9.6" height="9.6" rx="2.4" fill="none" stroke="#f58220" stroke-width="1.5"/><path d="M3.6 3.4Q4 0.9 6.6 0.9H11.4Q14.2 0.9 14.2 3.6V8.2Q14.2 10.6 11 10.8" fill="none" stroke="#f58220" stroke-width="1.5"/></svg>
<div style="left:1417px;top:218px;width:277px;height:258px;background:#ffffff;border:1px solid #d0d0e0;"></div>
<div style="left:1418px;top:258px;width:274.4000000000001px;height:38px;background:#007acc;"></div>
<div style="left:1426px;top:232px;width:14px;height:14px;background:#ffffff;border:1px solid #c9cde0;"></div>
<svg style="left:1442px;top:231.6px" width="14" height="16" viewBox="0 0 14 16"><path d="M4.6 1.8Q7 -0.4 9.4 1.8" fill="none" stroke="#3c3c3c" stroke-width="1.1"/><path d="M0.6 2.9H13.4" stroke="#3c3c3c" stroke-width="1.5"/><path d="M1.9 4.4H12.1V13.4Q12.1 15.2 10.4 15.2H3.6Q1.9 15.2 1.9 13.4z" fill="#f6f6f6" stroke="#3c3c3c" stroke-width="1.1"/><path d="M4.6 5.4V14.2M7 5.4V14.2M9.4 5.4V14.2" stroke="#3c3c3c" stroke-width="1.3"/></svg>
<svg style="left:1456.7px;top:232.6px" width="14.2" height="14.2" viewBox="0 0 15 15"><rect x="0" y="0" width="15" height="15" rx="1" fill="#8c8c8c"/><path d="M3 3L12 12M12 3L3 12" stroke="#fff" stroke-width="2.4"/></svg>
<span style="left:1491.90px;top:225.90px;height:20px;line-height:20px;font-size:11.4px;color:#1e1e1e;white-space:nowrap;transform-origin:0 50%;transform:scaleX(0.9249);">Folia dachowa AQUATEC 120 (rolka 75m2</span>
<div style="left:1426px;top:270px;width:14px;height:14px;background:#ffffff;border:1px solid #e8eef6;"></div>
<svg style="left:1428px;top:272px" width="11" height="10" viewBox="0 0 11 10"><path d="M0.8 4.8L3.8 8L9.8 1.4" fill="none" stroke="#111" stroke-width="1.5"/></svg>
<svg style="left:1443px;top:268.8px" width="14" height="16" viewBox="0 0 14 16"><path d="M4.6 1.8Q7 -0.4 9.4 1.8" fill="none" stroke="#06213a" stroke-width="1.1"/><path d="M0.6 2.9H13.4" stroke="#06213a" stroke-width="1.5"/><path d="M1.9 4.4H12.1V13.4Q12.1 15.2 10.4 15.2H3.6Q1.9 15.2 1.9 13.4z" fill="#0a5c9c" stroke="#06213a" stroke-width="1.1"/><path d="M4.6 5.4V14.2M7 5.4V14.2M9.4 5.4V14.2" stroke="#06213a" stroke-width="1.3"/></svg>
<svg style="left:1458.3px;top:269.4px" width="15.3" height="15.3" viewBox="0 0 15 15"><rect x="0" y="0" width="15" height="15" rx="1" fill="#929292"/><path d="M3 3L12 12M12 3L3 12" stroke="#fff" stroke-width="2.4"/></svg>
<span style="left:1495.40px;top:263.70px;height:20px;line-height:20px;font-size:11.4px;color:#ffffff;white-space:nowrap;transform-origin:0 50%;transform:scaleX(0.9204);">Blachodachówka Bella Sara 350</span>
<div style="left:1426px;top:308px;width:14px;height:14px;background:#ffffff;border:1px solid #c9cde0;"></div>
<svg style="left:1443px;top:306.9px" width="14" height="16" viewBox="0 0 14 16"><path d="M4.6 1.8Q7 -0.4 9.4 1.8" fill="none" stroke="#3c3c3c" stroke-width="1.1"/><path d="M0.6 2.9H13.4" stroke="#3c3c3c" stroke-width="1.5"/><path d="M1.9 4.4H12.1V13.4Q12.1 15.2 10.4 15.2H3.6Q1.9 15.2 1.9 13.4z" fill="#f6f6f6" stroke="#3c3c3c" stroke-width="1.1"/><path d="M4.6 5.4V14.2M7 5.4V14.2M9.4 5.4V14.2" stroke="#3c3c3c" stroke-width="1.3"/></svg>
<svg style="left:1458.3px;top:307.5px" width="15.3" height="15.3" viewBox="0 0 15 15"><rect x="0" y="0" width="15" height="15" rx="1" fill="#8c8c8c"/><path d="M3 3L12 12M12 3L3 12" stroke="#fff" stroke-width="2.4"/></svg>
<span style="left:1495.20px;top:302.00px;height:20px;line-height:20px;font-size:11.4px;color:#1e1e1e;white-space:nowrap;transform-origin:0 50%;transform:scaleX(0.9534);">Wkręty farmerskie</span>
<span style="left:1435.90px;top:478.30px;height:20px;line-height:20px;font-size:12px;color:#1e1e1e;white-space:nowrap;transform-origin:0 50%;transform:scaleX(0.8877);">J.m.=mm</span>
<div style="left:1417px;top:499px;width:277px;height:21px;background:#f6f6f9;"></div>
<div style="left:1417px;top:520px;width:16px;height:152px;background:#f1f1f5;"></div>
<div style="left:1433px;top:520px;width:261px;height:152px;background:#ffffff;"></div>
<div style="left:1433px;top:520px;width:261px;height:21px;background:#c8dcf3;"></div>
<svg style="left:1414px;top:496px" width="280" height="176" viewBox="1414 496 280 176"><path d="M1416.5 499.2V672M1432.5 499.2V672M1468.3 499.2V672M1528.3 499.2V672M1588.3 499.2V672M1648.3 499.2V672M1416.5 499.2H1694M1416.5 520.2H1694M1416.5 541.2H1694M1416.5 562.2H1694M1416.5 583.2H1694M1416.5 604.2H1694M1416.5 625.2H1694M1416.5 646.2H1694M1416.5 667.2H1694M1416.5 688.2H1694" stroke="#cfcfe0" stroke-width="1" fill="none"/><path d="M1423.4 527.2V535L1427.2 531.1z" fill="#1e1e1e"/></svg>
<span style="left:1437.40px;top:501.00px;height:20px;line-height:20px;font-size:12px;color:#1e1e1e;white-space:nowrap;transform-origin:0 50%;transform:scaleX(0.9000);">ID</span>
<span style="left:1473.00px;top:501.00px;height:20px;line-height:20px;font-size:12px;color:#1e1e1e;white-space:nowrap;transform-origin:0 50%;transform:scaleX(0.8738);">Szer</span>
<span style="left:1533.00px;top:501.00px;height:20px;line-height:20px;font-size:12px;color:#1e1e1e;white-space:nowrap;transform-origin:0 50%;transform:scaleX(0.9450);">Wys</span>
<span style="left:1593.50px;top:501.00px;height:20px;line-height:20px;font-size:12px;color:#1e1e1e;white-space:nowrap;transform-origin:0 50%;transform:scaleX(0.9506);">Ilość</span>
<span style="left:1653.20px;top:501.00px;height:20px;line-height:20px;font-size:12px;color:#1e1e1e;white-space:nowrap;transform-origin:0 50%;transform:scaleX(0.8955);">X</span>
<span style="left:1444.06px;top:521.50px;height:20px;line-height:20px;font-size:12px;color:#1e1e1e;white-space:nowrap;transform-origin:0 50%;transform:scaleX(0.9750);">105</span>
<span style="left:1498.13px;top:521.50px;height:20px;line-height:20px;font-size:12px;color:#1e1e1e;white-space:nowrap;transform-origin:0 50%;transform:scaleX(0.9950);">1150</span>
<span style="left:1564.26px;top:521.50px;height:20px;line-height:20px;font-size:12px;color:#1e1e1e;white-space:nowrap;transform-origin:0 50%;transform:scaleX(0.9750);">735</span>
<span style="left:1620.78px;top:521.50px;height:20px;line-height:20px;font-size:12px;color:#1e1e1e;white-space:nowrap;transform-origin:0 50%;transform:scaleX(0.9750);">0.83</span>
<div style="left:1664px;top:524px;width:14px;height:14px;background:#ffffff;border:1px solid #e4ecf6;"></div>
<span style="left:1444.06px;top:542.50px;height:20px;line-height:20px;font-size:12px;color:#1e1e1e;white-space:nowrap;transform-origin:0 50%;transform:scaleX(0.9750);">106</span>
<span style="left:1498.13px;top:542.50px;height:20px;line-height:20px;font-size:12px;color:#1e1e1e;white-space:nowrap;transform-origin:0 50%;transform:scaleX(0.9950);">1150</span>
<span style="left:1564.26px;top:542.50px;height:20px;line-height:20px;font-size:12px;color:#1e1e1e;white-space:nowrap;transform-origin:0 50%;transform:scaleX(0.9750);">735</span>
<span style="left:1637.05px;top:542.50px;height:20px;line-height:20px;font-size:12px;color:#1e1e1e;white-space:nowrap;transform-origin:0 50%;transform:scaleX(0.9750);">1</span>
<div style="left:1664px;top:545px;width:14px;height:14px;background:#ffffff;border:1px solid #c9cde0;"></div>
<span style="left:1444.06px;top:563.50px;height:20px;line-height:20px;font-size:12px;color:#1e1e1e;white-space:nowrap;transform-origin:0 50%;transform:scaleX(0.9750);">107</span>
<span style="left:1498.13px;top:563.50px;height:20px;line-height:20px;font-size:12px;color:#1e1e1e;white-space:nowrap;transform-origin:0 50%;transform:scaleX(0.9950);">1150</span>
<span style="left:1564.26px;top:563.50px;height:20px;line-height:20px;font-size:12px;color:#1e1e1e;white-space:nowrap;transform-origin:0 50%;transform:scaleX(0.9750);">735</span>
<span style="left:1637.05px;top:563.50px;height:20px;line-height:20px;font-size:12px;color:#1e1e1e;white-space:nowrap;transform-origin:0 50%;transform:scaleX(0.9750);">1</span>
<div style="left:1664px;top:566px;width:14px;height:14px;background:#ffffff;border:1px solid #c9cde0;"></div>
<span style="left:1444.06px;top:584.50px;height:20px;line-height:20px;font-size:12px;color:#1e1e1e;white-space:nowrap;transform-origin:0 50%;transform:scaleX(0.9750);">108</span>
<span style="left:1498.13px;top:584.50px;height:20px;line-height:20px;font-size:12px;color:#1e1e1e;white-space:nowrap;transform-origin:0 50%;transform:scaleX(0.9950);">1150</span>
<span style="left:1564.26px;top:584.50px;height:20px;line-height:20px;font-size:12px;color:#1e1e1e;white-space:nowrap;transform-origin:0 50%;transform:scaleX(0.9750);">735</span>
<span style="left:1637.05px;top:584.50px;height:20px;line-height:20px;font-size:12px;color:#1e1e1e;white-space:nowrap;transform-origin:0 50%;transform:scaleX(0.9750);">1</span>
<div style="left:1664px;top:587px;width:14px;height:14px;background:#ffffff;border:1px solid #c9cde0;"></div>
<span style="left:1444.06px;top:605.50px;height:20px;line-height:20px;font-size:12px;color:#1e1e1e;white-space:nowrap;transform-origin:0 50%;transform:scaleX(0.9750);">109</span>
<span style="left:1498.13px;top:605.50px;height:20px;line-height:20px;font-size:12px;color:#1e1e1e;white-space:nowrap;transform-origin:0 50%;transform:scaleX(0.9950);">1150</span>
<span style="left:1564.26px;top:605.50px;height:20px;line-height:20px;font-size:12px;color:#1e1e1e;white-space:nowrap;transform-origin:0 50%;transform:scaleX(0.9750);">735</span>
<span style="left:1637.05px;top:605.50px;height:20px;line-height:20px;font-size:12px;color:#1e1e1e;white-space:nowrap;transform-origin:0 50%;transform:scaleX(0.9750);">1</span>
<div style="left:1664px;top:608px;width:14px;height:14px;background:#ffffff;border:1px solid #c9cde0;"></div>
<span style="left:1445.00px;top:626.50px;height:20px;line-height:20px;font-size:12px;color:#1e1e1e;white-space:nowrap;transform-origin:0 50%;transform:scaleX(0.9750);">110</span>
<span style="left:1498.13px;top:626.50px;height:20px;line-height:20px;font-size:12px;color:#1e1e1e;white-space:nowrap;transform-origin:0 50%;transform:scaleX(0.9950);">1150</span>
<span style="left:1564.26px;top:626.50px;height:20px;line-height:20px;font-size:12px;color:#1e1e1e;white-space:nowrap;transform-origin:0 50%;transform:scaleX(0.9750);">735</span>
<span style="left:1637.05px;top:626.50px;height:20px;line-height:20px;font-size:12px;color:#1e1e1e;white-space:nowrap;transform-origin:0 50%;transform:scaleX(0.9750);">1</span>
<div style="left:1664px;top:629px;width:14px;height:14px;background:#ffffff;border:1px solid #c9cde0;"></div>
<span style="left:1445.82px;top:647.50px;height:20px;line-height:20px;font-size:12px;color:#1e1e1e;white-space:nowrap;transform-origin:0 50%;transform:scaleX(0.9750);">111</span>
<span style="left:1498.13px;top:647.50px;height:20px;line-height:20px;font-size:12px;color:#1e1e1e;white-space:nowrap;transform-origin:0 50%;transform:scaleX(0.9950);">1150</span>
<span style="left:1564.26px;top:647.50px;height:20px;line-height:20px;font-size:12px;color:#1e1e1e;white-space:nowrap;transform-origin:0 50%;transform:scaleX(0.9750);">735</span>
<span style="left:1620.78px;top:647.50px;height:20px;line-height:20px;font-size:12px;color:#1e1e1e;white-space:nowrap;transform-origin:0 50%;transform:scaleX(0.9750);">0.83</span>
<div style="left:1664px;top:650px;width:14px;height:14px;background:#ffffff;border:1px solid #c9cde0;"></div>
<span style="left:1445.00px;top:668.50px;height:20px;line-height:20px;font-size:12px;color:#1e1e1e;white-space:nowrap;transform-origin:0 50%;transform:scaleX(0.9750);">112</span>
<span style="left:1498.13px;top:668.50px;height:20px;line-height:20px;font-size:12px;color:#1e1e1e;white-space:nowrap;transform-origin:0 50%;transform:scaleX(0.9950);">1150</span>
<span style="left:1564.26px;top:668.50px;height:20px;line-height:20px;font-size:12px;color:#1e1e1e;white-space:nowrap;transform-origin:0 50%;transform:scaleX(0.9750);">735</span>
<span style="left:1637.05px;top:668.50px;height:20px;line-height:20px;font-size:12px;color:#1e1e1e;white-space:nowrap;transform-origin:0 50%;transform:scaleX(0.9750);">1</span>
<div style="left:1664px;top:671px;width:14px;height:14px;background:#ffffff;border:1px solid #c9cde0;"></div>
<div style="left:181.6px;top:12.7px;width:29.6px;height:29.6px;border-radius:50%;background:#8b0000;"></div>
<span style="left:191.75px;top:17.40px;height:20px;line-height:20px;font-size:16.6px;color:#ffffff;white-space:nowrap;transform-origin:0 50%;transform:scaleX(1.0000);">1</span>
<div style="left:1654.9px;top:258.8px;width:29.6px;height:29.6px;border-radius:50%;background:#8b0000;"></div>
<span style="left:1665.05px;top:263.50px;height:20px;line-height:20px;font-size:16.6px;color:#ffffff;white-space:nowrap;transform-origin:0 50%;transform:scaleX(1.0000);">2</span>
<div style="left:325.8px;top:19.7px;width:29.6px;height:29.6px;border-radius:50%;background:#8b0000;"></div>
<span style="left:335.95px;top:24.40px;height:20px;line-height:20px;font-size:16.6px;color:#ffffff;white-space:nowrap;transform-origin:0 50%;transform:scaleX(1.0000);">3</span>
<div style="left:760.2px;top:127.9px;width:29.6px;height:29.6px;border-radius:50%;background:#8b0000;"></div>
<span style="left:770.35px;top:132.60px;height:20px;line-height:20px;font-size:16.6px;color:#ffffff;white-space:nowrap;transform-origin:0 50%;transform:scaleX(1.0000);">4</span>
<div style="left:194.7px;top:63.6px;width:29.6px;height:29.6px;border-radius:50%;background:#8b0000;"></div>
<span style="left:204.85px;top:68.30px;height:20px;line-height:20px;font-size:16.6px;color:#ffffff;white-space:nowrap;transform-origin:0 50%;transform:scaleX(1.0000);">5</span>
</div></body></html>
